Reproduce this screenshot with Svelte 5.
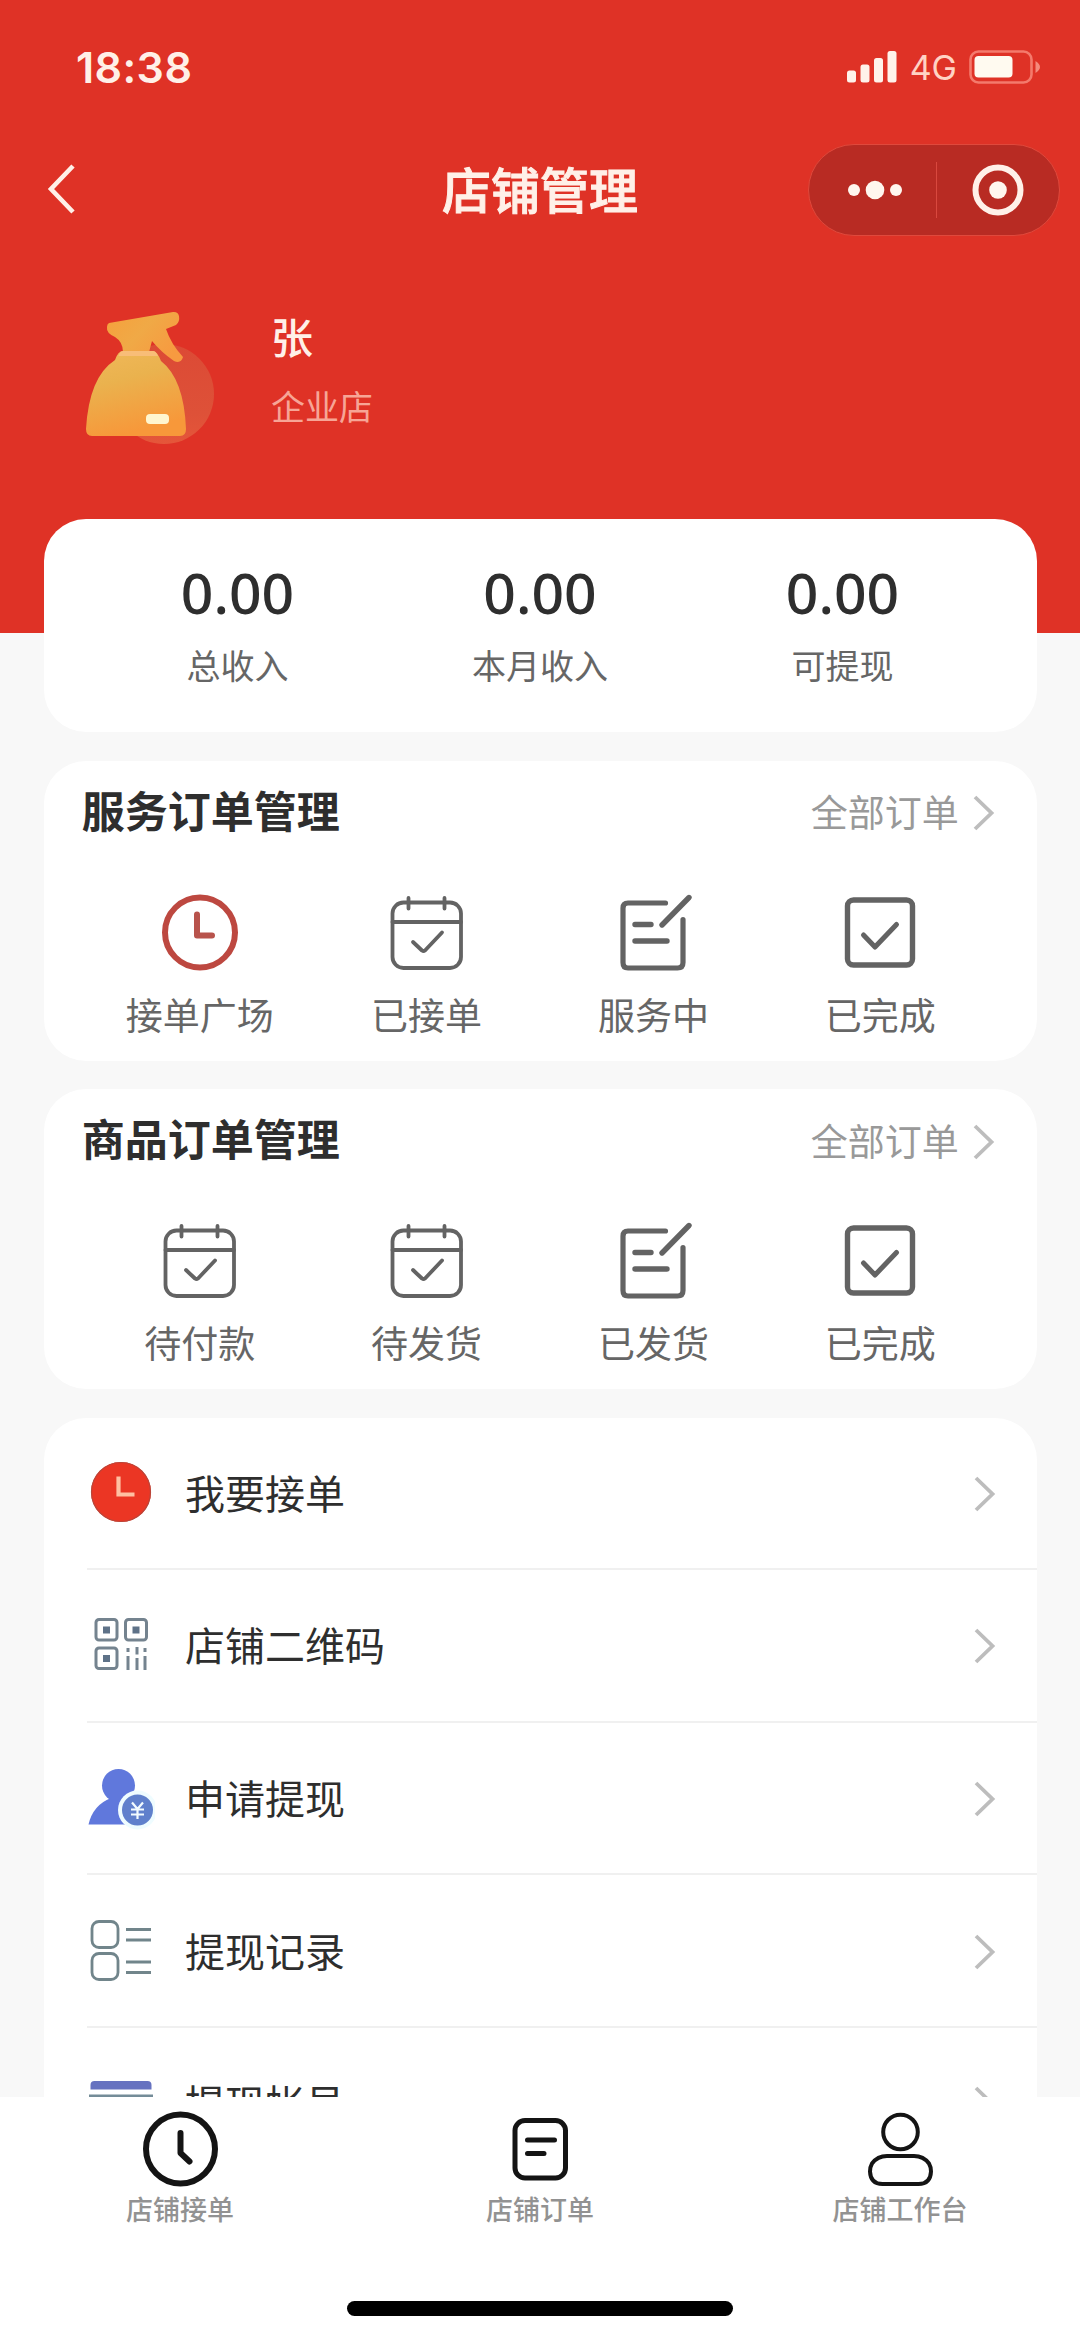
<script>
  const stats = [
    { value: '0.00', label: '总收入' },
    { value: '0.00', label: '本月收入' },
    { value: '0.00', label: '可提现' }
  ];
  const groups = [
    {
      title: '服务订单管理',
      items: [
        { icon: 'clock', label: '接单广场' },
        { icon: 'calendar', label: '已接单' },
        { icon: 'edit', label: '服务中' },
        { icon: 'done', label: '已完成' }
      ]
    },
    {
      title: '商品订单管理',
      items: [
        { icon: 'calendar', label: '待付款' },
        { icon: 'calendar', label: '待发货' },
        { icon: 'edit', label: '已发货' },
        { icon: 'done', label: '已完成' }
      ]
    }
  ];
  const menu = [
    { icon: 'clock', label: '我要接单' },
    { icon: 'qr', label: '店铺二维码' },
    { icon: 'cash', label: '申请提现' },
    { icon: 'list', label: '提现记录' },
    { icon: 'card', label: '提现帐号' }
  ];
  const tabs = [
    { icon: 'clock', label: '店铺接单' },
    { icon: 'order', label: '店铺订单' },
    { icon: 'user', label: '店铺工作台' }
  ];
</script>

{#snippet chevron()}
  <svg class="chevron" width="24" height="40" viewBox="0 0 24 40" fill="none" stroke="#bdbdbd" stroke-width="3.8">
    <path d="M3 4 L19.500 20 L3 36" />
  </svg>
{/snippet}

<div class="screen">
  <header>
    <div class="status">
      <span class="time">18:38</span>
      <div class="indicators">
        <svg width="50" height="32" viewBox="0 0 50 32" fill="#fff2ea">
          <rect x="0" y="19.500" width="9" height="12" rx="2.500" />
          <rect x="13.500" y="13.500" width="9" height="18" rx="2.500" />
          <rect x="27" y="7" width="9" height="24.500" rx="2.500" />
          <rect x="40.500" y="0" width="9" height="31.500" rx="2.500" />
        </svg>
        <span class="network">4G</span>
        <svg width="72" height="34" viewBox="0 0 72 34">
          <rect x="1.500" y="1.500" width="61" height="31" rx="8" fill="none" stroke="#f47a6c" stroke-width="2.600" />
          <rect x="5.500" y="6" width="38" height="21.500" rx="4" fill="#fffaf0" />
          <path d="M66.500 11 Q71 14 71 17 Q71 20 66.500 23 Z" fill="#f58a7c" />
        </svg>
      </div>
    </div>

    <nav class="navbar">
      <svg class="back" width="34" height="56" viewBox="0 0 34 56" fill="none" stroke="#fff0e8" stroke-width="4.600">
        <path d="M28 4 L6 27 L28 50" />
      </svg>
      <h1>店铺管理</h1>
      <div class="capsule">
        <svg width="56" height="24" viewBox="0 0 56 24" fill="#fff6ee">
          <circle cx="7" cy="12" r="6" />
          <circle cx="28" cy="12" r="9.300" />
          <circle cx="49" cy="12" r="6" />
        </svg>
        <i></i>
        <svg width="52" height="52" viewBox="0 0 52 52">
          <circle cx="26" cy="26" r="22.500" fill="none" stroke="#fff0e8" stroke-width="6" />
          <circle cx="26" cy="26" r="8.800" fill="#fff6ee" />
        </svg>
      </div>
    </nav>

    <section class="profile">
      <svg width="134" height="136" viewBox="0 0 134 136">
        <defs>
          <linearGradient id="bottle" x1="0" y1="0" x2="0.300" y2="1">
            <stop offset="0" stop-color="#f0b85a" />
            <stop offset="0.400" stop-color="#eab24e" />
            <stop offset="1" stop-color="#f7983a" />
          </linearGradient>
          <linearGradient id="nozzle" x1="0" y1="0" x2="1" y2="0.600">
            <stop offset="0" stop-color="#f6a03c" />
            <stop offset="0.500" stop-color="#f0a946" />
            <stop offset="1" stop-color="#f79a40" />
          </linearGradient>
          <linearGradient id="halo" x1="0.500" y1="0" x2="0.500" y2="1">
            <stop offset="0" stop-color="#dc4a35" />
            <stop offset="0.700" stop-color="#de5138" />
            <stop offset="1" stop-color="#e5563a" />
          </linearGradient>
        </defs>
        <circle cx="84" cy="84" r="50" fill="url(#halo)" />
        <path d="M29 13 L93 2 Q98 1.500 99 6 Q100 12 96 15 L86 19 Q91 34 103 47 Q101 54 94 51 Q81 42 72 31 L69 42 L43 42 Q43 32 35 27 Q26 23 27 17 Q27 14 29 13 Z" fill="url(#nozzle)" />
        <path d="M43 41 H73 Q77 41 81 51 Q104 69 106 119 Q106 126 100 126 H12 Q6 126 6 119 Q9 67 35 50 Q38 41 43 41 Z" fill="url(#bottle)" />
        <path d="M43 41 H73 Q76 41 78 46 H38.500 Q40 41 43 41 Z" fill="#f8bd78" />
        <rect x="66" y="104" width="23" height="10" rx="4" fill="#fff6cf" />
      </svg>
      <div class="owner">
        <strong>张</strong>
        <span>企业店</span>
      </div>
    </section>
  </header>

  <main>
    <section class="card stats">
      {#each stats as s}
        <div class="stat">
          <b>{s.value}</b>
          <span>{s.label}</span>
        </div>
      {/each}
    </section>

    {#each groups as g}
      <section class="card orders">
        <div class="heading">
          <h2>{g.title}</h2>
          <span class="all">全部订单</span>
          {@render chevron()}
        </div>
        <div class="grid">
          {#each g.items as item}
            <div class="cell">
              <svg width="84" height="84" viewBox="0 0 84 84" fill="none" stroke="#636363" stroke-linecap="round" stroke-linejoin="round">
                {#if item.icon === 'clock'}
                  <circle cx="42" cy="41.500" r="35" stroke="#bd4840" stroke-width="6" />
                  <path d="M39 23.500 V44.500 H54" stroke="#b8534c" stroke-width="6" />
                {:else if item.icon === 'calendar'}
                  <rect x="7.500" y="11.500" width="68.500" height="65.500" rx="11" stroke-width="3.800" />
                  <path d="M23.500 7 V17.500 M59.500 7 V17.500 M7.500 31 H76" stroke-width="3.800" />
                  <path d="M28 51 L37 59.500 Q38.500 60.500 40 59.500 L57 41.500" stroke-width="3.800" />
                {:else if item.icon === 'edit'}
                  <path d="M54.500 12 H17 Q12 12 12 17 V71.500 Q12 77 17 77 H66.500 Q72 77 72 71.500 V28.500" stroke-width="5.200" />
                  <path d="M78 6.500 L51 34 M24 33.500 H40 M24 50 H56" stroke-width="5.400" />
                {:else}
                  <rect x="9.500" y="9" width="65" height="65" rx="6" stroke-width="5.400" />
                  <path d="M25.500 44 L37 56 L58.500 33.500" stroke-width="5" />
                {/if}
              </svg>
              <span>{item.label}</span>
            </div>
          {/each}
        </div>
      </section>
    {/each}

    <section class="card menu">
      {#each menu as m}
        <div class="row">
          <svg width="68" height="68" viewBox="0 0 68 68" fill="none">
            {#if m.icon === 'clock'}
              <circle cx="34" cy="33" r="30" fill="#eb3624" />
              <circle cx="34" cy="33" r="29.500" stroke="#b8463a" stroke-width="1.200" />
              <path d="M31.500 17.500 V35.500 H47.500" stroke="#ffc0a2" stroke-width="4.200" />
            {:else if m.icon === 'qr'}
              <g stroke="#74838f" stroke-width="3">
                <rect x="9" y="8.500" width="21" height="20.500" rx="3" />
                <rect x="38.500" y="8.500" width="21" height="20.500" rx="3" />
                <rect x="9" y="37" width="21" height="20.500" rx="3" />
                <path d="M41 37 V41 M50 36 V43.500 M58 37 V41 M41 45 V59 M50 47 V59 M58 45 V59" />
              </g>
              <path d="M16 15.500 h7 v7 h-7 z M45.500 15.500 h7 v7 h-7 z M16 44 h7 v7 h-7 z" fill="#5e7288" />
            {:else if m.icon === 'cash'}
              <circle cx="31.500" cy="21.500" r="16.500" fill="#6078dc" />
              <path d="M1.500 60.500 Q6 41 24 34 L42 34 L42 60.500 Z" fill="#6078dc" />
              <circle cx="50.500" cy="46" r="19.500" fill="#effcff" />
              <circle cx="50.500" cy="46" r="15.500" fill="#6080cc" />
              <path d="M45 38.500 L50.500 45 L56 38.500 M50.500 45 V55 M44 45.500 H57 M44 50.500 H57" stroke="#f2fbff" stroke-width="2.200" />
            {:else if m.icon === 'list'}
              <g stroke="#71858b" stroke-width="2.800">
                <rect x="5" y="4.500" width="26" height="26" rx="7" />
                <rect x="5" y="36.500" width="26" height="26" rx="7" />
                <path d="M39 12.500 H64 M39 23 H64 M39 45 H64 M39 55.500 H64" />
              </g>
            {:else}
              <path d="M3.500 20.500 V16 Q3.500 12 7.500 12 H60.500 Q64.500 12 64.500 16 V20.500 Z" fill="#6672c0" />
              <path d="M3.500 27 H64.500 V60 H3.500 Z" stroke="#748c98" stroke-width="3" />
            {/if}
          </svg>
          <span>{m.label}</span>
          {@render chevron()}
        </div>
      {/each}
    </section>
  </main>

  <footer>
    <div class="tabs">
      {#each tabs as t}
        <div class="tab">
          <svg width="80" height="80" viewBox="0 0 80 80" fill="none" stroke="#141414" stroke-linecap="round" stroke-linejoin="round">
            {#if t.icon === 'clock'}
              <circle cx="40.500" cy="41" r="34.500" stroke-width="6" />
              <path d="M40.500 25 V45 L49.500 53.500" stroke-width="6" />
            {:else if t.icon === 'order'}
              <rect x="15" y="12.500" width="50.500" height="57.500" rx="10" stroke-width="5" />
              <path d="M27.500 32 H54.500 M27.500 45.500 H44" stroke-width="5" />
            {:else}
              <circle cx="40.500" cy="24" r="17.300" stroke-width="4" />
              <path d="M27 48 H54 Q63.500 48 69 55.500 Q71 59 71 63.500 Q70.500 76 58.500 76 H22.500 Q10.500 76 10 63.500 Q10 59 12 55.500 Q17.500 48 27 48 Z" stroke-width="4" />
            {/if}
          </svg>
          <span>{t.label}</span>
        </div>
      {/each}
    </div>
    <div class="home"></div>
  </footer>
</div>

<style>
  :global(body) { margin: 0; }
  .screen {
    width: 1080px;
    height: 2340px;
    overflow: hidden;
    display: flex;
    flex-direction: column;
    background: #f8f8f8;
    font-family: 'Noto Sans CJK SC', 'Noto Sans', sans-serif;
    color: #2e2e2e;
  }
  svg { display: block; flex: none; }
  span, b, strong { white-space: nowrap; }
  header {
    flex: none;
    box-sizing: border-box;
    height: 633px;
    background: #df3226;
    color: #fff0e8;
  }
  .status {
    box-sizing: border-box;
    height: 133px;
    padding: 0 39px 0 76px;
    display: flex;
    align-items: center;
    justify-content: space-between;
  }
  .time {
    font: 600 43px/50px Inter, sans-serif;
    letter-spacing: 0.4px;
  }
  .indicators { display: flex; align-items: center; }
  .network {
    font: 400 34px/40px Inter, sans-serif;
    color: #ffd3c4;
    margin: 2px 12px 0 13px;
  }
  .navbar {
    box-sizing: border-box;
    height: 114px;
    padding: 0 20px;
    display: grid;
    grid-template-columns: 1fr auto 1fr;
    align-items: center;
  }
  .back { margin-left: 25px; }
  h1 {
    margin: 0 0 5px;
    font-size: 49px;
    line-height: 60px;
    font-weight: 500;
    -webkit-text-stroke: 1px #fff0e8;
  }
  .capsule {
    justify-self: end;
    box-sizing: border-box;
    width: 252px;
    height: 92px;
    padding: 0 35px 0 38px;
    border: 1.500px solid #e0493c;
    border-radius: 46px;
    background: #b82b23;
    display: flex;
    align-items: center;
    justify-content: space-between;
  }
  .capsule i { width: 1.500px; height: 56px; background: #d9483e; margin-left: -2px; }
  .profile {
    display: flex;
    padding: 63px 80px 0;
  }
  .owner { display: flex; flex-direction: column; margin-left: 57px; padding-top: 1px; }
  .owner strong { font-size: 42px; line-height: 50px; font-weight: 500; }
  .owner span { font-size: 34px; line-height: 40px; margin-top: 25px; color: #f7a596; }
  main {
    flex: 1;
    min-height: 0;
    margin-top: -114px;
    padding: 0 43.500px;
    display: flex;
    flex-direction: column;
    gap: 28.500px;
  }
  .card { flex: none; box-sizing: border-box; background: #fff; border-radius: 42px; }
  .stats {
    height: 213px;
    padding: 39px 42.700px 0;
    display: grid;
    grid-template-columns: repeat(3, 1fr);
  }
  .stat { display: flex; flex-direction: column; align-items: center; }
  .stat b { font: 500 57px/68px 'Noto Sans', sans-serif; }
  .stat span { font-size: 34px; line-height: 40px; margin-top: 19px; color: #666; }
  .orders { height: 300px; padding: 23px 42.700px 0; }
  .heading { display: flex; align-items: center; height: 50px; margin-left: -4.500px; }
  h2 { margin: 0; flex: 1; font-size: 43px; line-height: 50px; font-weight: 700; }
  .all { font-size: 37px; line-height: 44px; color: #999; margin: 5px 13px 0 0; }
  .heading .chevron { margin: 9px -2px 0 0; }
  .grid { display: grid; grid-template-columns: repeat(4, 1fr); margin-top: 57px; }
  .cell { display: flex; flex-direction: column; align-items: center; }
  .cell span { font-size: 37px; line-height: 44px; margin-top: 17px; color: #666; }
  .menu { border-radius: 42px 42px 0 0; }
  .row {
    box-sizing: border-box;
    height: 152.600px;
    margin-left: 43.500px;
    padding-right: 40px;
    border-bottom: 2px solid #f0f0f0;
    display: flex;
    align-items: center;
  }
  .row span { flex: 1; font-size: 40px; line-height: 48px; margin: -2px 0 0 30px; }
  .row .chevron { margin-top: 2px; }
  footer {
    flex: none;
    box-sizing: border-box;
    height: 243px;
    padding: 11px 0 24px;
    background: #fff;
    display: flex;
    flex-direction: column;
    align-items: center;
    justify-content: space-between;
  }
  .tabs { width: 100%; display: grid; grid-template-columns: repeat(3, 1fr); }
  .tab { display: flex; flex-direction: column; align-items: center; }
  .tab span { font-size: 27px; line-height: 32px; margin-top: 5px; color: #929292; font-weight: 500; }
  .home { width: 386px; height: 15px; border-radius: 8px; background: #000; }
</style>
